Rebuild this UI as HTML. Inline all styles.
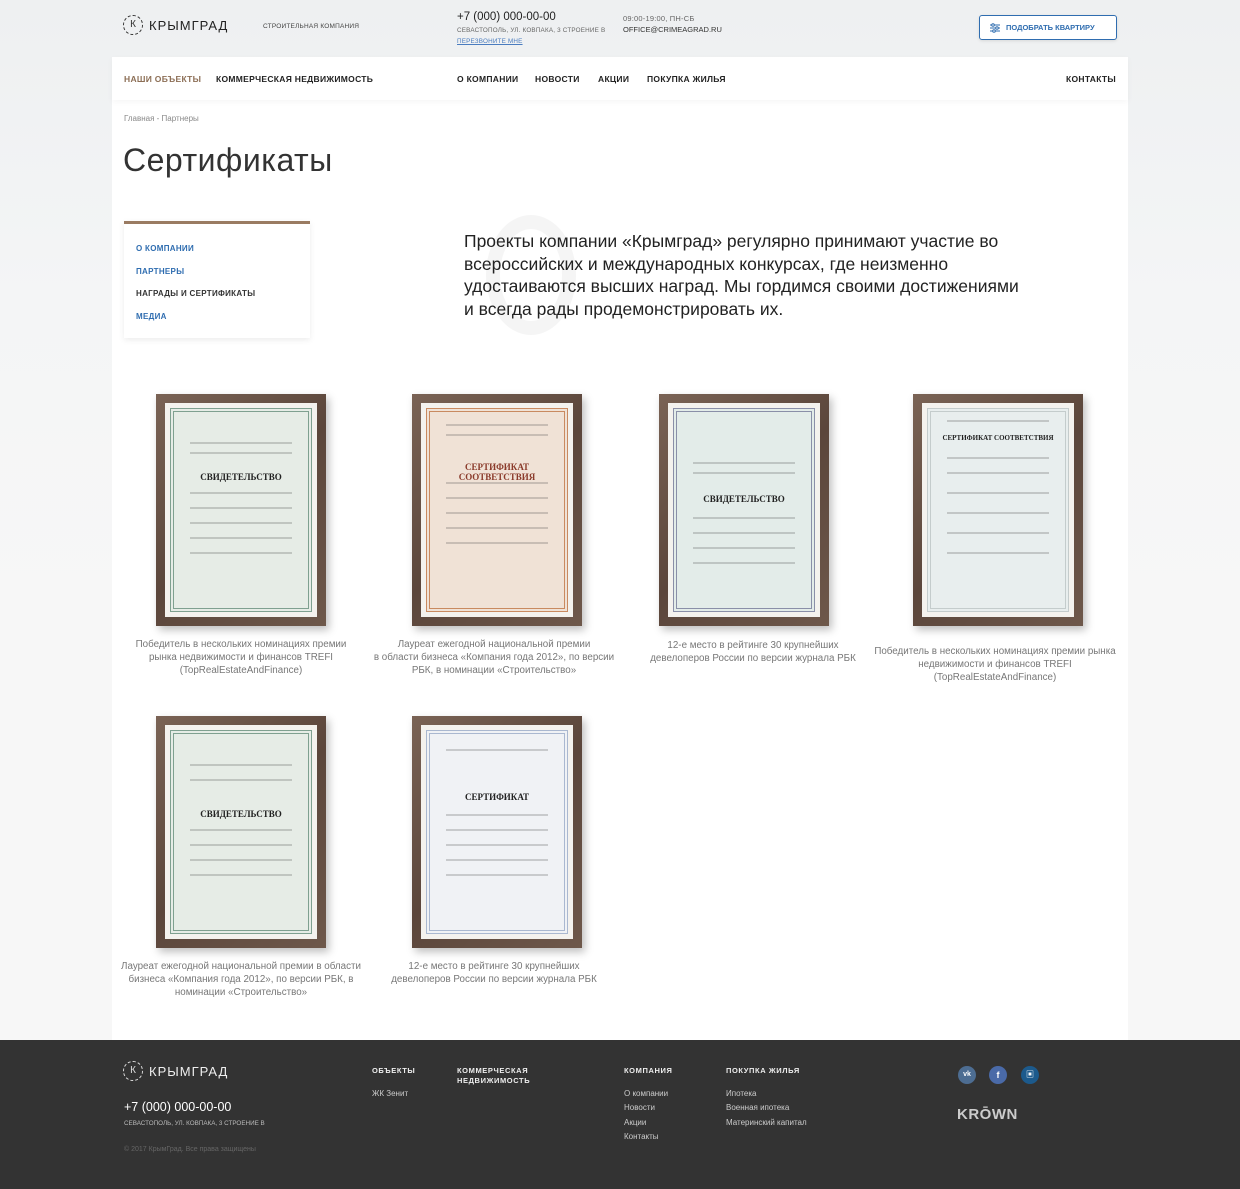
<!DOCTYPE html>
<html><head><meta charset="utf-8"><style>
*{margin:0;padding:0;box-sizing:border-box}
body{width:1240px;height:1189px;position:relative;overflow:hidden;font-family:"Liberation Sans","Noto Sans CJK SC",sans-serif;background:linear-gradient(#eef0f1,#f4f5f6 300px,#f7f7f7 600px);color:#222}
.abs{position:absolute}
.panel{left:112px;top:57px;width:1016px;height:983px;background:#fff}
.nav{left:112px;top:57px;width:1016px;height:43px;background:#fff;box-shadow:0 2px 6px rgba(0,0,0,.04)}
.nav span{position:absolute;top:17px;font-size:8.5px;font-weight:bold;letter-spacing:.3px;color:#222}
.sm{font-size:7px;color:#666;letter-spacing:.2px}
.frame{position:absolute;width:170px;height:232px;background:linear-gradient(135deg,#7a6355,#5b463b 50%,#6e584b);padding:9px;box-shadow:3px 4px 8px rgba(0,0,0,.25)}
.mat{width:100%;height:100%;background:#f4f2ee;padding:5px}
.paper{width:100%;height:100%;border:4px double;position:relative;overflow:hidden}
.paper i{position:absolute;left:12%;right:12%;height:2px;background:rgba(60,60,60,.22)}
.paper b{position:absolute;left:0;right:0;text-align:center;font-family:"Liberation Serif",serif;font-size:9px;color:#222}
.cap{position:absolute;width:300px;text-align:center;font-size:9.8px;line-height:13px;color:#777;white-space:nowrap}
.side a{display:block;font-size:8px;font-weight:bold;color:#2f6db0;letter-spacing:.3px;height:22.5px}
.foot{left:0;top:1040px;width:1240px;height:149px;background:#333}
.fh{font-size:7.5px;font-weight:bold;color:#eee;letter-spacing:.6px;line-height:10px}
.fl{font-size:8px;color:#ccc;line-height:14.3px}
.soc{width:18px;height:18px;border-radius:50%;position:absolute;top:1066px;color:#fff;font-size:9px;font-weight:bold;text-align:center;line-height:18px}
</style></head><body>
<div class="abs panel"></div>
<div class="abs" style="left:123px;top:15px;width:20px;height:20px;border:1.5px dashed #333;border-radius:50%;font-size:10px;text-align:center;line-height:17px;color:#333">К</div>
<div class="abs" style="left:149px;top:18px;font-size:13px;letter-spacing:1px;color:#222">КРЫМГРАД</div>
<div class="abs sm" style="left:263px;top:23px;font-size:6.5px;color:#444">СТРОИТЕЛЬНАЯ КОМПАНИЯ</div>
<div class="abs" style="left:457px;top:11px;font-size:11.5px;color:#222">+7 (000) 000-00-00</div>
<div class="abs sm" style="left:457px;top:27px;font-size:6.3px">СЕВАСТОПОЛЬ, УЛ. КОВПАКА, 3 СТРОЕНИЕ В</div>
<div class="abs sm" style="left:457px;top:38px;font-size:6.3px;color:#4a7cbf;text-decoration:underline">ПЕРЕЗВОНИТЕ МНЕ</div>
<div class="abs sm" style="left:623px;top:14px;font-size:7.5px">09:00-19:00, ПН-СБ</div>
<div class="abs" style="left:623px;top:25px;font-size:7.5px;color:#333">OFFICE@CRIMEAGRAD.RU</div>
<div class="abs" style="left:979px;top:15px;width:138px;height:25px;border:1px solid #2f6db0;border-radius:3px;background:#fff;font-size:7.5px;font-weight:bold;color:#2f6db0;line-height:23px;padding-left:26px;box-shadow:0 1px 3px rgba(0,0,0,.1)">ПОДОБРАТЬ КВАРТИРУ
<svg style="position:absolute;left:10px;top:7px" width="10" height="10" viewBox="0 0 10 10" stroke="#2f6db0" fill="none"><path d="M0 2h10M0 5h10M0 8h10"/><circle cx="3" cy="2" r="1.3" fill="#fff"/><circle cx="7" cy="5" r="1.3" fill="#fff"/><circle cx="4" cy="8" r="1.3" fill="#fff"/></svg></div>
<div class="abs nav">
<span style="left:12px;color:#8c6e55">НАШИ ОБЪЕКТЫ</span>
<span style="left:104px">КОММЕРЧЕСКАЯ НЕДВИЖИМОСТЬ</span>
<span style="left:345px">О КОМПАНИИ</span>
<span style="left:423px">НОВОСТИ</span>
<span style="left:486px">АКЦИИ</span>
<span style="left:535px">ПОКУПКА ЖИЛЬЯ</span>
<span style="left:954px">КОНТАКТЫ</span>
</div>
<div class="abs" style="left:124px;top:114px;font-size:8px;color:#888">Главная - Партнеры</div>
<div class="abs" style="left:123px;top:142px;font-size:32px;color:#333;letter-spacing:.5px">Сертификаты</div>
<div class="abs" style="left:124px;top:221px;width:186px;height:117px;background:#fff;border-top:3px solid #9a7b62;box-shadow:0 2px 6px rgba(0,0,0,.08)"></div>
<div class="abs side" style="left:136px;top:244px">
<a>О КОМПАНИИ</a><a>ПАРТНЕРЫ</a><a style="color:#333">НАГРАДЫ И СЕРТИФИКАТЫ</a><a>МЕДИА</a>
</div>
<div class="abs" style="left:486px;top:215px;width:90px;height:120px;border-radius:50%;border:14px solid #f5f5f5"></div>
<div class="abs" style="left:464px;top:230px;width:620px;font-size:17.5px;line-height:22.5px;color:#222;white-space:nowrap">Проекты компании «Крымград» регулярно принимают участие во<br>всероссийских и международных конкурсах, где неизменно<br>удостаиваются высших наград. Мы гордимся своими достижениями<br>и всегда рады продемонстрировать их.</div>

<div class="frame" style="left:156px;top:394px"><div class="mat"><div class="paper" style="background:#e6ece6;border-color:#7fa090"><b style="top:60px">СВИДЕТЕЛЬСТВО</b><i style="top:30px"></i><i style="top:40px"></i><i style="top:80px"></i><i style="top:95px"></i><i style="top:110px"></i><i style="top:125px"></i><i style="top:140px"></i></div></div></div>
<div class="frame" style="left:412px;top:394px"><div class="mat"><div class="paper" style="background:#f0e2d6;border-color:#c98a60"><b style="top:50px;color:#8a3a2a">СЕРТИФИКАТ СООТВЕТСТВИЯ</b><i style="top:12px"></i><i style="top:22px"></i><i style="top:70px"></i><i style="top:85px"></i><i style="top:100px"></i><i style="top:115px"></i><i style="top:130px"></i></div></div></div>
<div class="frame" style="left:659px;top:394px"><div class="mat"><div class="paper" style="background:#e3ece9;border-color:#8a8fa8"><b style="top:82px">СВИДЕТЕЛЬСТВО</b><i style="top:50px"></i><i style="top:60px"></i><i style="top:105px"></i><i style="top:120px"></i><i style="top:135px"></i><i style="top:150px"></i></div></div></div>
<div class="frame" style="left:913px;top:394px"><div class="mat"><div class="paper" style="background:#e8eeee;border-color:#c4cccc"><b style="top:22px;font-size:7px">СЕРТИФИКАТ СООТВЕТСТВИЯ</b><i style="top:8px"></i><i style="top:45px"></i><i style="top:60px"></i><i style="top:80px"></i><i style="top:100px"></i><i style="top:120px"></i><i style="top:140px"></i></div></div></div>
<div class="frame" style="left:156px;top:716px"><div class="mat"><div class="paper" style="background:#e6ece6;border-color:#7fa090"><b style="top:75px">СВИДЕТЕЛЬСТВО</b><i style="top:30px"></i><i style="top:45px"></i><i style="top:95px"></i><i style="top:110px"></i><i style="top:125px"></i><i style="top:140px"></i></div></div></div>
<div class="frame" style="left:412px;top:716px"><div class="mat"><div class="paper" style="background:#f0f2f5;border-color:#aab8d0"><b style="top:58px">СЕРТИФИКАТ</b><i style="top:15px"></i><i style="top:80px"></i><i style="top:95px"></i><i style="top:110px"></i><i style="top:125px"></i><i style="top:140px"></i></div></div></div>

<div class="cap" style="left:91px;top:638px">Победитель в нескольких номинациях премии<br>рынка недвижимости и финансов TREFI<br>(TopRealEstateAndFinance)</div>
<div class="cap" style="left:344px;top:638px">Лауреат ежегодной национальной премии<br>в области бизнеса «Компания года 2012», по версии<br>РБК, в номинации «Строительство»</div>
<div class="cap" style="left:603px;top:639px">12-е место в рейтинге 30 крупнейших<br>девелоперов России по версии журнала РБК</div>
<div class="cap" style="left:845px;top:645px">Победитель в нескольких номинациях премии рынка<br>недвижимости и финансов TREFI<br>(TopRealEstateAndFinance)</div>
<div class="cap" style="left:91px;top:960px">Лауреат ежегодной национальной премии в области<br>бизнеса «Компания года 2012», по версии РБК, в<br>номинации «Строительство»</div>
<div class="cap" style="left:344px;top:960px">12-е место в рейтинге 30 крупнейших<br>девелоперов России по версии журнала РБК</div>

<div class="abs foot"></div>
<div class="abs" style="left:123px;top:1061px;width:20px;height:20px;border:1.5px dashed #ddd;border-radius:50%;font-size:10px;text-align:center;line-height:17px;color:#ddd">К</div>
<div class="abs" style="left:149px;top:1064px;font-size:13px;letter-spacing:1px;color:#eee">КРЫМГРАД</div>
<div class="abs" style="left:124px;top:1100px;font-size:12.5px;color:#fff">+7 (000) 000-00-00</div>
<div class="abs" style="left:124px;top:1120px;font-size:6.3px;color:#bbb">СЕВАСТОПОЛЬ, УЛ. КОВПАКА, 3 СТРОЕНИЕ В</div>
<div class="abs" style="left:124px;top:1146px;font-size:7px;color:#666">© 2017 КрымГрад. Все права защищены</div>
<div class="abs fh" style="left:372px;top:1066px">ОБЪЕКТЫ</div>
<div class="abs fl" style="left:372px;top:1087px">ЖК Зенит</div>
<div class="abs fh" style="left:457px;top:1066px">КОММЕРЧЕСКАЯ<br>НЕДВИЖИМОСТЬ</div>
<div class="abs fh" style="left:624px;top:1066px">КОМПАНИЯ</div>
<div class="abs fl" style="left:624px;top:1087px">О компании<br>Новости<br>Акции<br>Контакты</div>
<div class="abs fh" style="left:726px;top:1066px">ПОКУПКА ЖИЛЬЯ</div>
<div class="abs fl" style="left:726px;top:1087px">Ипотека<br>Военная ипотека<br>Материнский капитал</div>
<div class="soc" style="left:958px;background:#4d6d92;font-size:7px">vk</div>
<div class="soc" style="left:989px;background:#4a6aa8">f</div>
<div class="soc" style="left:1021px;background:#1c5a8c;font-size:8px">▣</div>
<div class="abs" style="left:957px;top:1106px;font-size:15px;font-weight:bold;color:#ccc;letter-spacing:.5px">KRŌWN</div>
</body></html>
